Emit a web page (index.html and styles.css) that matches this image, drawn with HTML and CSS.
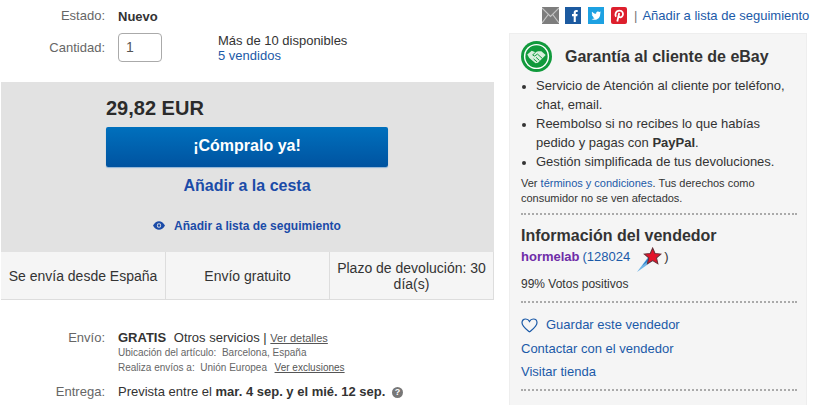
FILE: index.html
```html
<!DOCTYPE html>
<html lang="es">
<head>
<meta charset="utf-8">
<title>Artículo</title>
<link rel="stylesheet" href="styles.css">
</head>
<body>
<div class="page">
  <main class="left">
    <div class="row row-state">
      <div class="label">Estado:</div>
      <div class="value"><b>Nuevo</b></div>
    </div>
    <div class="row row-qty">
      <div class="label">Cantidad:</div>
      <div class="qty">1</div>
      <div class="avail">Más de 10 disponibles<br><a href="#">5 vendidos</a></div>
    </div>
    <section class="buybox">
      <div class="price">29,82 EUR</div>
      <a class="buy" href="#">¡Cómpralo ya!</a>
      <a class="cart" href="#">Añadir a la cesta</a>
      <a class="watch" href="#">
        <svg class="eye" width="12" height="9" viewBox="0 0 11 8"><path fill="#1b4ba8" fill-rule="evenodd" d="M0 4C1.5 1.4 3.4 0 5.5 0S9.500 1.400 11 4C9.500 6.600 7.600 8 5.500 8S1.500 6.600 0 4ZM5.500 2A2 2 0 1 0 5.500 6A2 2 0 1 0 5.500 2Z"/><circle cx="5.500" cy="4" r="1.200" fill="#1b4ba8"/></svg>
        Añadir a lista de seguimiento
      </a>
      <div class="perks">
        <div class="perk">Se envía desde España</div>
        <div class="perk">Envío gratuito</div>
        <div class="perk">Plazo de devolución: 30 día(s)</div>
      </div>
    </section>
    <div class="row row-ship">
      <div class="label">Envío:</div>
      <div class="value">
        <div class="ship-line"><b class="gratis">GRATIS</b> Otros servicios | <a class="small-link" href="#">Ver detalles</a></div>
        <div class="note">Ubicación del artículo: &nbsp;Barcelona, España</div>
        <div class="note">Realiza envíos a: &nbsp;Unión Europea &nbsp;<a class="note-link" href="#">Ver exclusiones</a></div>
      </div>
    </div>
    <div class="row row-delivery">
      <div class="label">Entrega:</div>
      <div class="value">Prevista entre el <b>mar. 4 sep. y el mié. 12 sep.</b>
        <span class="help">?</span>
      </div>
    </div>
  </main>
  <aside class="right">
    <div class="share">
      <svg class="ico ico-mail" width="17" height="17" viewBox="0 0 17 17"><rect width="17" height="17" fill="#7d7d7d"/><path d="M0 1L8.500 9.500L17 1M0 16L6.300 7.500M17 16L10.700 7.500" fill="none" stroke="#c4c4c4" stroke-width="1.200"/></svg>
      <svg class="ico" width="16" height="17" viewBox="0 0 16 17"><rect width="16" height="17" fill="#1c5aa0"/><path fill="#fff" d="M8.700 15V9.300H7V7.100H8.700V5.600C8.700 3.900 9.700 3 11.200 3H12.700V5.100H11.700C10.900 5.100 10.800 5.500 10.800 6V7.100H12.600L12.300 9.300H10.800V15Z"/></svg>
      <svg class="ico" width="16" height="17" viewBox="0 0 16 17"><rect width="16" height="17" fill="#1da1e2"/><path fill="#fff" d="M13 5.400C12.600 5.600 12.300 5.700 11.800 5.700C12.300 5.400 12.600 5 12.800 4.500C12.400 4.800 11.900 5 11.400 5.100C10.500 4.100 8.300 4.500 8.100 6.100C8.100 6.400 8.100 6.600 8.200 6.800C6.500 6.700 5.100 5.900 4.100 4.700C3.500 5.700 3.900 6.900 4.700 7.500C4.400 7.500 4.100 7.400 3.800 7.200C3.800 8.300 4.600 9.200 5.600 9.400C5.300 9.500 5 9.500 4.700 9.400C5 10.300 5.800 10.900 6.700 11C5.800 11.700 4.700 12 3.500 11.900C7.500 14.200 12.500 11.600 12.200 6.400C12.500 6.200 12.800 5.800 13 5.400Z"/></svg>
      <svg class="ico" width="16" height="17" viewBox="0 0 16 17"><rect width="16" height="17" rx="2" fill="#dd1f2d"/><path fill="none" stroke="#fff" stroke-width="1.800" d="M5 9.800C3.800 8 4.400 3.700 8.400 3.700C11.800 3.700 12.500 6.500 11.700 8.500C10.900 10.500 8.800 10.900 7.800 9.300M8.200 6L6.300 14.500"/></svg>
      <span class="pipe">|</span>
      <a class="share-link" href="#">Añadir a lista de seguimiento</a>
    </div>
    <div class="panel">
      <div class="guarantee-head">
        <svg width="31" height="31" viewBox="0 0 32 32"><circle cx="16" cy="16" r="16" fill="#119a3c"/><circle cx="16" cy="16" r="13" fill="#fff"/><circle cx="16" cy="16" r="11.500" fill="#119a3c"/><path fill="#d8efdd" d="M6.500 14L11 10L15 11.500L17.500 10.500L21 10.500L25.500 14.500L23 17L17.500 22.500L15 23L8.500 17.500Z"/><path fill="none" stroke="#119a3c" stroke-width="1" d="M15 11.500L12 14.500L14 15.500L17 13.500L22 18M19 20L15.500 16.800M16.500 21.500L13 18.500"/></svg>
        <h2>Garantía al cliente de eBay</h2>
      </div>
      <ul class="guarantee">
        <li>Servicio de Atención al cliente por teléfono, chat, email.</li>
        <li>Reembolso si no recibes lo que habías pedido y pagas con <b>PayPal</b>.</li>
        <li>Gestión simplificada de tus devoluciones.</li>
      </ul>
      <p class="terms">Ver <a href="#">términos y condiciones</a>. Tus derechos como consumidor no se ven afectados.</p>
      <div class="seller">
        <h3>Información del vendedor</h3>
        <div class="seller-name"><a class="name" href="#">hormelab</a> <a href="#">(128024</a>
          <svg class="star" width="26" height="26" viewBox="0 0 25 25"><path d="M1 24L13 8L18 12Z" fill="#6fb4e6"/><path d="M6 18L13 9L15 11Z" fill="#2a7cc8"/><path fill="#e3132a" stroke="#6b3038" stroke-width="1" d="M16 1L18.300 6.200L24 6.800L19.700 10.500L21 16L16 13.100L11 16L12.300 10.500L8 6.800L13.700 6.200Z"/></svg>
          <span>)</span></div>
        <div class="votes">99% Votos positivos</div>
      </div>
      <div class="seller-links">
        <a href="#" class="save"><svg width="17" height="15" viewBox="0 0 17 15"><path fill="none" stroke="#1b5aa8" stroke-width="1.200" d="M8.500 13.800C5 11 1 8.500 1 4.800C1 2.500 2.700 1 4.700 1C6.300 1 7.700 1.900 8.500 3.400C9.300 1.900 10.700 1 12.300 1C14.300 1 16 2.500 16 4.800C16 8.500 12 11 8.500 13.800Z"/></svg>Guardar este vendedor</a>
        <a href="#">Contactar con el vendedor</a>
        <a href="#">Visitar tienda</a>
      </div>
      <div class="more">Ver otros artículos</div>
    </div>
  </aside>
</div>
</body>
</html>
```
FILE: styles.css
```css
html, body { margin: 0; padding: 0; height: 405px; overflow: hidden; background: #fff; }
body { font-family: "Liberation Sans", Arial, sans-serif; font-size: 13px; color: #333; }
a { color: #1b5aa8; text-decoration: none; }
.page { display: flex; align-items: flex-start; gap: 15px; width: 815px; }
.left { width: 494px; flex: none; }
.right { width: 291px; flex: none; }

.row { display: flex; }
.label { width: 105px; margin-right: 13px; text-align: right; color: #666; flex: none; }
.row-state { padding-top: 8px; line-height: 15px; }
.row-qty { margin-top: 8px; align-items: center; height: 29px; }
.qty { width: 44px; height: 29px; border: 1px solid #aaa; border-radius: 4px; padding-left: 7px; box-sizing: border-box; line-height: 27px; font-size: 14px; color: #555; }
.avail { margin-left: 56px; line-height: 15px; }

.buybox { margin: 20px 0 0 1px; background: #e2e2e2; height: 218px; display: flex; flex-direction: column; align-items: stretch; box-sizing: border-box; }
.price { margin: 15px 0 0 105px; font-size: 20px; font-weight: bold; line-height: 23px; color: #2b2b2b; }
.buy { margin: 7px 0 0 105px; width: 282px; height: 40px; box-sizing: border-box; background: linear-gradient(#0070bd, #0053a0); border-radius: 2px; color: #fff; font-size: 16px; font-weight: bold; text-align: center; line-height: 38px; box-shadow: 0 1px 1px #8fb4d8; }
.cart { margin: 9px 0 0 105px; width: 282px; text-align: center; font-size: 16px; font-weight: bold; line-height: 20px; color: #1b4ba8; }
.watch { margin: 23px 0 0 105px; width: 282px; text-align: center; font-size: 12px; font-weight: bold; line-height: 14px; color: #1b4ba8; }
.eye { margin-right: 6px; }
.perks { display: grid; grid-template-columns: 164px 164px 165px; margin-top: auto; height: 47px; background: #f5f5f5; border-bottom: 1px solid #ddd; }
.perk { display: flex; align-items: center; justify-content: center; text-align: center; line-height: 16px; padding: 0 5px; border-left: 1px solid #ddd; box-sizing: border-box; font-size: 14px; }
.perk:first-child { border-left: 0; }
.perk:last-child { border-right: 1px solid #ddd; }

.row-ship { margin-top: 29px; }
.row-ship .label, .row-delivery .label { line-height: 17px; }
.value { line-height: 17px; }
.ship-line { height: 16px; }
.gratis { margin-right: 4px; }
.small-link, .note-link { color: #555; text-decoration: underline; font-size: 11px; }
.note { font-size: 10px; color: #666; line-height: 15px; }
.note-link { font-size: 10px; margin-left: 2px; }
.row-delivery { margin-top: 8px; }
.help { display: inline-block; width: 11px; height: 11px; margin-left: 3px; border-radius: 50%; background: #777; color: #fff; font-size: 9px; font-weight: bold; line-height: 11px; text-align: center; vertical-align: 1px; }

.share { display: flex; align-items: center; height: 17px; margin-top: 7px; padding-left: 33px; }
.ico { margin-right: 7px; flex: none; }
.ico-mail { margin-right: 6px; }
.pipe { color: #777; margin: 0 5px 0 0; }
.share-link { font-size: 13px; white-space: nowrap; }
.panel { margin-top: 9px; background: #f5f5f5; border: 1px solid #eee; padding: 7px 9px 0 11px; height: 400px; box-sizing: border-box; width: 298px; }
.guarantee-head { display: flex; align-items: center; gap: 13px; }
.guarantee-head h2 { margin: 0; font-size: 16px; font-weight: bold; color: #333; }
.guarantee { margin: 4px 0 0; padding: 0 0 0 15px; line-height: 19px; }
.guarantee li::marker { font-size: 12px; }
.terms { margin: 5px 0 0; font-size: 11px; line-height: 15px; padding-bottom: 7px; border-bottom: 2px dotted #aaa; }
.seller { padding: 12px 0 9px; border-bottom: 2px dotted #aaa; }
.seller h3 { margin: 0 0 2px; font-size: 16px; font-weight: bold; line-height: 18px; color: #333; }
.seller-name { display: flex; align-items: center; gap: 3px; height: 18px; font-size: 13px; }
.name { color: #6f2da8; font-weight: bold; }
.star { margin: 7px -1px 0 3px; }
.votes { font-size: 12px; margin-top: 11px; line-height: 16px; }
.seller-links { display: flex; flex-direction: column; gap: 7.5px; padding: 14px 0 9px; line-height: 16px; border-bottom: 2px dotted #aaa; }
.save { display: flex; align-items: center; gap: 8px; }
.more { margin-top: 11px; font-size: 13px; }
```
